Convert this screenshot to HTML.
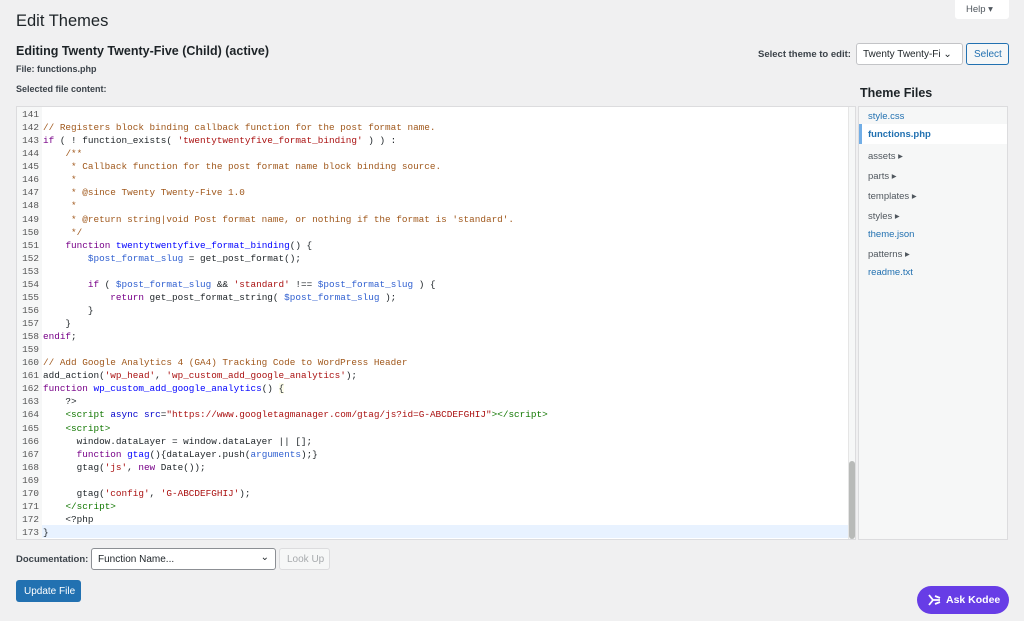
<!DOCTYPE html>
<html><head><style>
*{box-sizing:border-box;margin:0;padding:0}
body{width:1024px;height:621px;background:#f0f0f1;font-family:"Liberation Sans",sans-serif;color:#1d2327;position:relative;overflow:hidden}
.a{position:absolute}
h1{position:absolute;left:16px;top:12px;font-size:16.5px;font-weight:400}
.code{position:absolute;left:16px;top:106px;width:840px;height:434px;background:#fff;border:1px solid #dcdcde;overflow:hidden}
.gut{position:absolute;left:0;top:0;width:25px;height:100%;background:#f6f7f7}
pre{position:absolute;left:0;top:0;font-family:"Liberation Mono",monospace;font-size:9.35px;line-height:13.06px;padding-top:1px}
.ln{display:inline-block;width:22px;text-align:right;color:#555;margin-right:4px}
.c{color:#a0581c}.k{color:#770088}.s{color:#aa1111}.v{color:#2f5fd0}.d{color:#0000ff}.t{color:#117700}.at{color:#0000cc}
.hl{position:absolute;left:25px;top:418px;width:806px;height:13px;background:#e8f2ff}
.side{position:absolute;left:858px;top:106px;width:150px;height:434px;background:#f6f7f7;border:1px solid #dcdcde}
.side div{position:absolute;left:9px;font-size:9.5px;color:#50575e}
.side .l{color:#2271b1}
</style></head><body>
<h1>Edit Themes</h1>
<div class="a" style="left:955px;top:0;width:54px;height:19px;background:#fff;border-radius:0 0 3px 3px;font-size:9.5px;color:#50575e;padding:4px 0 0 11px">Help ▾</div>
<div class="a" style="left:16px;top:44px;font-size:12.5px;font-weight:700">Editing Twenty Twenty-Five (Child) (active)</div>
<div class="a" style="left:16px;top:64px;font-size:9px;font-weight:700;color:#3c434a">File: functions.php</div>
<div class="a" style="left:16px;top:84px;font-size:9px;font-weight:700;color:#3c434a">Selected file content:</div>
<div class="a" style="left:758px;top:49px;font-size:9.5px;font-weight:700;color:#3c434a">Select theme to edit:</div>
<div class="a" style="left:856px;top:43px;width:107px;height:22px;background:#fff;border:1px solid #c3c4c7;border-radius:3px;font-size:10px;padding:5px 0 0 6px;white-space:nowrap;overflow:hidden">Twenty Twenty-Fi&nbsp;⌄</div>
<div class="a" style="left:966px;top:43px;width:43px;height:22px;background:#f6f7f7;border:1px solid #2271b1;border-radius:3px;font-size:10px;color:#2271b1;padding:5px 0 0 7px">Select</div>
<div class="a" style="left:860px;top:86px;font-size:12.5px;font-weight:700">Theme Files</div>
<div class="code"><div class="gut"></div><div class="hl"></div>
<pre><span class="ln">141</span>
<span class="ln">142</span><span class="c">// Registers block binding callback function for the post format name.</span>
<span class="ln">143</span><span class="k">if</span> ( ! function_exists( <span class="s">'twentytwentyfive_format_binding'</span> ) ) :
<span class="ln">144</span>    <span class="c">/**</span>
<span class="ln">145</span><span class="c">     * Callback function for the post format name block binding source.</span>
<span class="ln">146</span><span class="c">     *</span>
<span class="ln">147</span><span class="c">     * @since Twenty Twenty-Five 1.0</span>
<span class="ln">148</span><span class="c">     *</span>
<span class="ln">149</span><span class="c">     * @return string|void Post format name, or nothing if the format is 'standard'.</span>
<span class="ln">150</span><span class="c">     */</span>
<span class="ln">151</span>    <span class="k">function</span> <span class="d">twentytwentyfive_format_binding</span>() {
<span class="ln">152</span>        <span class="v">$post_format_slug</span> = get_post_format();
<span class="ln">153</span>
<span class="ln">154</span>        <span class="k">if</span> ( <span class="v">$post_format_slug</span> &amp;&amp; <span class="s">'standard'</span> !== <span class="v">$post_format_slug</span> ) {
<span class="ln">155</span>            <span class="k">return</span> get_post_format_string( <span class="v">$post_format_slug</span> );
<span class="ln">156</span>        }
<span class="ln">157</span>    }
<span class="ln">158</span><span class="k">endif</span>;
<span class="ln">159</span>
<span class="ln">160</span><span class="c">// Add Google Analytics 4 (GA4) Tracking Code to WordPress Header</span>
<span class="ln">161</span>add_action(<span class="s">'wp_head'</span>, <span class="s">'wp_custom_add_google_analytics'</span>);
<span class="ln">162</span><span class="k">function</span> <span class="d">wp_custom_add_google_analytics</span>() <span style="background:#ffe">{</span>
<span class="ln">163</span>    ?&gt;
<span class="ln">164</span>    <span class="t">&lt;script</span> <span class="at">async</span> <span class="at">src</span>=<span class="s">"https://www.googletagmanager.com/gtag/js?id=G-ABCDEFGHIJ"</span><span class="t">&gt;&lt;/script&gt;</span>
<span class="ln">165</span>    <span class="t">&lt;script&gt;</span>
<span class="ln">166</span>      window.dataLayer = window.dataLayer || [];
<span class="ln">167</span>      <span class="k">function</span> <span class="d">gtag</span>(){dataLayer.push(<span class="v">arguments</span>);}
<span class="ln">168</span>      gtag(<span class="s">'js'</span>, <span class="k">new</span> Date());
<span class="ln">169</span>
<span class="ln">170</span>      gtag(<span class="s">'config'</span>, <span class="s">'G-ABCDEFGHIJ'</span>);
<span class="ln">171</span>    <span class="t">&lt;/script&gt;</span>
<span class="ln">172</span>    &lt;?php
<span class="ln">173</span>}</pre>
<div class="a" style="left:831px;top:0;width:8px;height:100%;background:#f6f7f7;border-left:1px solid #e5e5e5"></div>
<div class="a" style="left:832px;top:354px;width:6px;height:78px;background:#b8bab8;border-radius:3px"></div>
</div>
<div class="side">
<div class="l" style="top:4px">style.css</div>
<div class="l" style="top:17px;left:0;width:148px;height:20px;background:#fff;border-left:3px solid #72aee6;padding:5px 0 0 6px;font-weight:700;color:#2271b1">functions.php</div>
<div style="top:44px">assets ▸</div>
<div style="top:64px">parts ▸</div>
<div style="top:84px">templates ▸</div>
<div style="top:104px">styles ▸</div>
<div class="l" style="top:122px">theme.json</div>
<div style="top:142px">patterns ▸</div>
<div class="l" style="top:160px">readme.txt</div>
</div>
<div class="a" style="left:16px;top:554px;font-size:9.5px;font-weight:700;color:#3c434a">Documentation:</div>
<div class="a" style="left:91px;top:548px;width:185px;height:22px;background:#fff;border:1px solid #8c8f94;border-radius:3px;font-size:10px;padding:5px 0 0 6px">Function Name...<span style="position:absolute;right:6px;top:3px">⌄</span></div>
<div class="a" style="left:279px;top:548px;width:51px;height:22px;background:#f6f7f7;border:1px solid #dcdcde;border-radius:3px;font-size:10px;color:#a7aaad;padding:5px 0 0 7px">Look Up</div>
<div class="a" style="left:16px;top:580px;width:65px;height:22px;background:#2271b1;border-radius:3px;font-size:10px;color:#fff;padding:6px 0 0 8px">Update File</div>
<div class="a" style="left:917px;top:586px;width:92px;height:28px;background:#673de6;border-radius:14px;color:#fff;font-size:10.5px;font-weight:700;padding:8px 0 0 29px">Ask Kodee
<svg class="a" style="left:10px;top:8px" width="14" height="12" viewBox="0 0 14 12"><path d="M2 1 L6 6 L2 11 M6 6 H13 M8 2 L13 4 M8 10 L13 8" stroke="#fff" stroke-width="1.8" fill="none"/></svg></div>
</body></html>
